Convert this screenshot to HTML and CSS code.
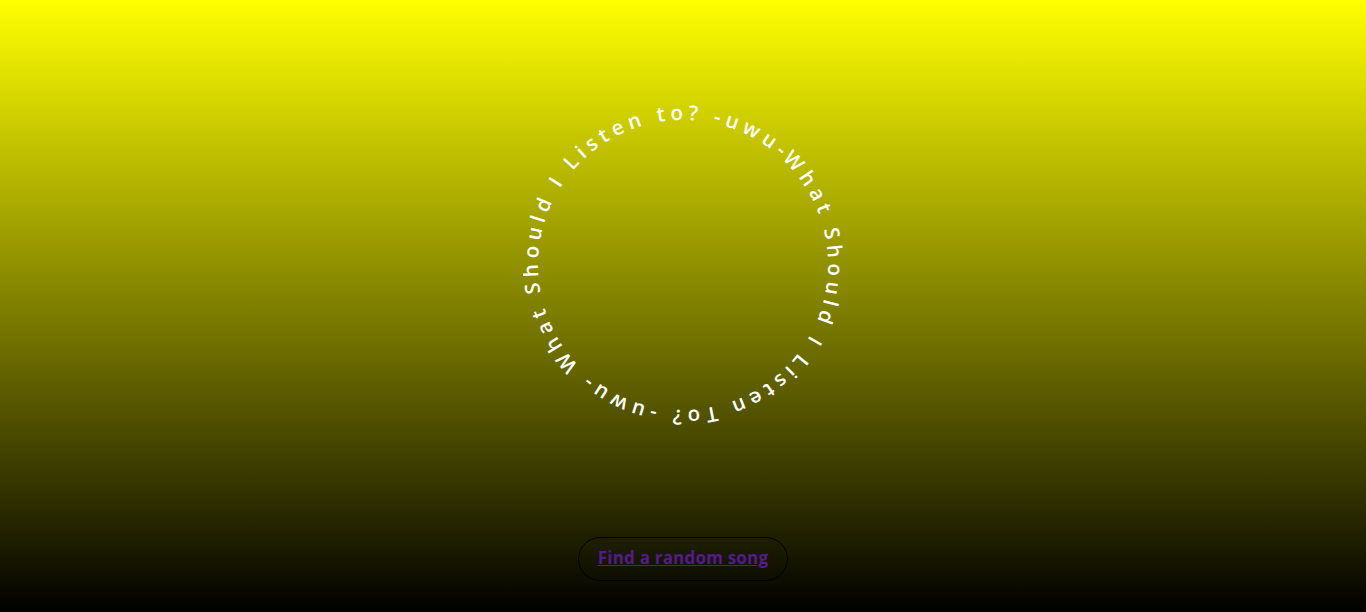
FILE: index.html
```html
<!DOCTYPE html>
<html lang="en">
<head>
<meta charset="utf-8">
<title>What Should I Listen To?</title>
<link rel="stylesheet" href="styles.css">
</head>
<body>
<main class="page">
  <div class="ring">
    <svg class="ring-svg" viewBox="0 0 320 320" width="320" height="320">
      <defs>
        <path id="circle" d="M160,15 a145,145 0 1,1 0,290 a145,145 0 1,1 0,-290"/>
      </defs>
      <g transform="rotate(43 160 160)">
        <text class="ring-text"><textPath href="#circle" textLength="908" lengthAdjust="spacing">What Should I Listen To? -uwu- What Should I Listen to? -uwu- </textPath></text>
      </g>
    </svg>
  </div>
  <div class="action">
    <a class="song-link" href="#">Find a random song</a>
  </div>
</main>
</body>
</html>
```

FILE: styles.css
```css
html, body {
  margin: 0;
  padding: 0;
  height: 100%;
}

body {
  background: linear-gradient(to bottom, #ffff00 0%, #000000 100%);
  font-family: "Open Sans", "Noto Sans", sans-serif;
  overflow: hidden;
}

.page {
  height: 100%;
  display: flex;
  flex-direction: column;
  align-items: center;
}

.ring {
  margin-top: 105px;
  width: 320px;
  height: 320px;
}

.ring-svg {
  display: block;
}

.ring-text {
  fill: #ffffff;
  font-family: "Open Sans", sans-serif;
  font-size: 20.5px;
  font-weight: 600;
}

.action {
  margin-top: 112px;
  width: 208px;
  height: 42px;
  border: 1px solid #000;
  border-radius: 22px;
  display: flex;
  align-items: center;
  justify-content: center;
}

.song-link {
  color: #551a8b;
  font-family: "Open Sans", sans-serif;
  font-weight: 700;
  font-size: 17px;
  letter-spacing: 0.2px;
  line-height: 20px;
  margin-top: -2px;
  text-decoration: underline;
}
```
